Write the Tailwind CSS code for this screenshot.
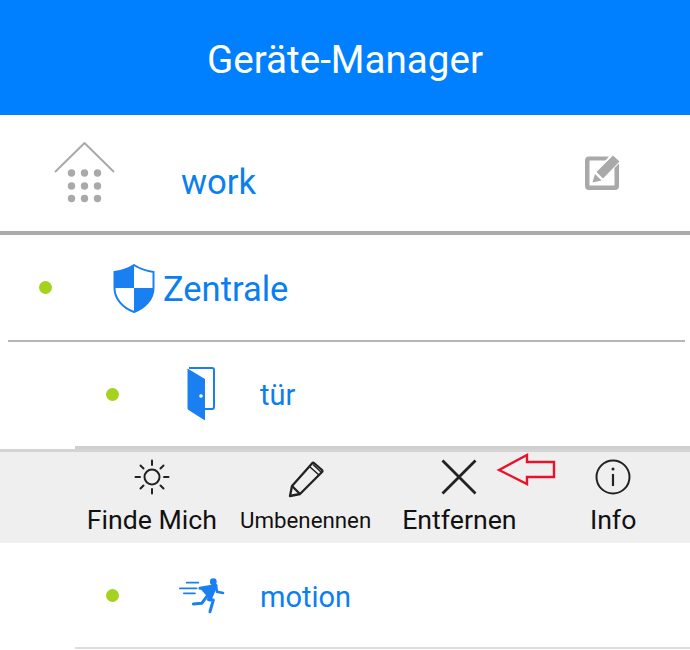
<!doctype html>
<html>
  <head>
    <meta charset="utf-8">
    <title>Geräte-Manager</title>
    <script src="https://cdn.jsdelivr.net/npm/@tailwindcss/browser@4"></script>
  </head>
  <body class="bg-white font-['Roboto',sans-serif] overflow-hidden">
    <div class="relative w-[690px] h-[650px] overflow-hidden">
      <!-- Header -->
      <div class="h-[115px] bg-[#007fff] flex items-center justify-center text-white text-[38.6px] pt-[5px]">Geräte-Manager</div>

      <!-- Home row -->
      <div class="h-[116px] flex items-center pl-[54px] pr-[70px]">
        <svg class="w-[61px] h-[62px] shrink-0" viewBox="0 0 61 62" fill="#a9a9a9">
          <path d="M1 30 L30.5 1 L60 30" fill="none" stroke="#a9a9a9" stroke-width="2"/>
          <circle cx="17.5" cy="31" r="3.7"/><circle cx="30.5" cy="31" r="3.7"/><circle cx="43.5" cy="31" r="3.7"/>
          <circle cx="17.5" cy="44" r="3.7"/><circle cx="30.5" cy="44" r="3.7"/><circle cx="43.5" cy="44" r="3.7"/>
          <circle cx="17.5" cy="56.5" r="3.7"/><circle cx="30.5" cy="56.5" r="3.7"/><circle cx="43.5" cy="56.5" r="3.7"/>
        </svg>
        <span class="ml-[66px] pt-[18px] text-[34.7px] text-[#0a7ff0] flex-1">work</span>
        <svg class="w-[36px] h-[36px] mb-[1px]" viewBox="0 0 36 36" fill="#a9a9a9">
          <path d="M5 1.500 H25 L21.500 5.500 H6 a0.500 0.500 0 0 0 -0.500 0.500 V30 a0.500 0.500 0 0 0 0.500 0.500 H30 a0.500 0.500 0 0 0 0.500 -0.500 V13 L35 8.500 V31 a4 4 0 0 1 -4 4 H5 a4 4 0 0 1 -4 -4 V5.500 a4 4 0 0 1 4 -4 Z"/>
          <path d="M29 0.500 L35.500 6.500 L19 23.500 L12.500 17 Z"/>
          <path d="M11 19 L17.500 25.500 L8.500 27.500 Z"/>
        </svg>
      </div>
      <div class="h-[4px] bg-[#aaaaaa]"></div>

      <!-- Zentrale row -->
      <div class="h-[105px] flex items-center pl-[39px]">
        <span class="w-[13px] h-[13px] rounded-full bg-[#a4d21e] shrink-0"></span>
        <svg class="ml-[61px] w-[42px] h-[49px] shrink-0 mt-[2px]" viewBox="0 0 42 49">
          <path d="M21 1 C15 5 8 7 1.500 8 V24 C1.500 35 10 44 21 48 C32 44 40.500 35 40.500 24 V8 C34 7 27 5 21 1 Z" fill="#fff" stroke="#1a7ff0" stroke-width="2"/>
          <path d="M21 1 C15 5 8 7 1.500 8 V24 H21 Z M21 24 H40.500 C40.500 35 32 44 21 48 Z" fill="#1a7ff0"/>
        </svg>
        <span class="ml-[8px] pt-[4px] text-[34.500px] text-[#0a7ff0]">Zentrale</span>
      </div>
      <div class="ml-[8px] mr-[5px] h-[2px] bg-[#b5b5b5]"></div>

      <!-- Tür row -->
      <div class="h-[104px] flex items-center pl-[106px]">
        <span class="w-[13px] h-[13px] rounded-full bg-[#a4d21e] shrink-0"></span>
        <svg class="ml-[67px] w-[30px] h-[54px] shrink-0" viewBox="0 0 30 54">
          <path d="M3 1 H26 a2 2 0 0 1 2 2 V40 a2 2 0 0 1 -2 2 H19" fill="none" stroke="#1a7ff0" stroke-width="2"/>
          <path d="M1.500 1.500 L19 12 V53.500 L2.500 43 a2 2 0 0 1 -1 -1.700 Z" fill="#1a7ff0"/>
          <circle cx="15" cy="29" r="1.800" fill="#fff"/>
        </svg>
        <span class="ml-[44px] pt-[4px] text-[29px] text-[#0a7ff0]">tür</span>
      </div>

      <!-- Action toolbar -->
      <div class="ml-[75px] h-[3px] bg-[#cfcfcf]"></div>
      <div class="h-[3px] bg-[#d4d4d4]"></div>
      <div class="h-[91px] bg-[#efefef] pl-[75px] grid grid-cols-4 text-[#111] text-center">
        <div class="flex flex-col items-center">
          <svg class="w-[36px] h-[36px] mt-[7px]" viewBox="0 0 36 36" fill="none" stroke="#222" stroke-width="2" stroke-linecap="round">
            <circle cx="18" cy="18" r="7.500"/>
            <path d="M18 1.500 V6 M18 30 V34.500 M1.500 18 H6 M30 18 H34.500 M6.500 6.500 L9.500 9.500 M26.500 26.500 L29.500 29.500 M6.500 29.500 L9.500 26.500 M26.500 9.500 L29.500 6.500"/>
          </svg>
          <span class="text-[26.700px] leading-[30px] mt-[10px] whitespace-nowrap">Finde Mich</span>
        </div>
        <div class="flex flex-col items-center">
          <svg class="w-[36px] h-[37px] mt-[9px]" viewBox="0 0 36 37" fill="none" stroke="#222" stroke-width="2.300" stroke-linejoin="round">
            <path d="M26 2 L34 9 a1.500 1.500 0 0 1 0 2 L12 33 L2 35 L4 25 L24 2.500 a1.500 1.500 0 0 1 2 -0.500 Z"/>
            <path d="M22 6 L31 14 M25 3.500 L33 11" stroke-width="1.500"/>
            <path d="M4 25 L12 33"/>
          </svg>
          <span class="text-[22.300px] leading-[30px] mt-[7px] whitespace-nowrap">Umbenennen</span>
        </div>
        <div class="flex flex-col items-center">
          <svg class="w-[36px] h-[36px] mt-[7px]" viewBox="0 0 36 36" fill="none" stroke="#222" stroke-width="2.800">
            <path d="M1.500 1.500 L34.500 34.500 M34.500 1.500 L1.500 34.500"/>
          </svg>
          <span class="text-[26.700px] leading-[30px] mt-[10px] whitespace-nowrap">Entfernen</span>
        </div>
        <div class="flex flex-col items-center">
          <svg class="w-[36px] h-[36px] mt-[7px]" viewBox="0 0 36 36" fill="none" stroke="#222" stroke-width="2">
            <circle cx="18" cy="18" r="16.500"/>
            <path d="M18 15 V27" stroke-width="2.200"/>
            <circle cx="18" cy="10" r="1.500" fill="#222" stroke="none"/>
          </svg>
          <span class="text-[26.700px] leading-[30px] mt-[10px] whitespace-nowrap">Info</span>
        </div>
      </div>

      <!-- Motion row -->
      <div class="h-[104px] flex items-center pl-[106px]">
        <span class="w-[13px] h-[13px] rounded-full bg-[#a4d21e] shrink-0"></span>
        <svg class="ml-[60px] w-[46px] h-[36px] shrink-0 mt-[2px]" viewBox="0 0 46 36" fill="none" stroke="#1a7ff0" stroke-linecap="round" stroke-linejoin="round">
          <circle cx="34.300" cy="3.700" r="3.400" fill="#1a7ff0" stroke="none"/>
          <path d="M7.700 4.700 H19.300 M0.800 10.300 H17.700 M4.800 15.300 H16" stroke-width="1.700"/>
          <path d="M21 10.300 L37 7.500 L31 22" fill="#1a7ff0" stroke-width="3"/>
          <path d="M37 8 L38 13.700 L44 15" stroke-width="2.600"/>
          <path d="M14.300 26 L22.700 25.300 L27.700 18.700" stroke-width="3"/>
          <path d="M29.300 21.500 L34.300 22 L31 33.700" stroke-width="3"/>
        </svg>
        <span class="ml-[35px] pt-[6px] text-[29px] text-[#0a7ff0]">motion</span>
      </div>
      <div class="ml-[75px] h-[2px] bg-[#dddddd]"></div>

      <!-- Red annotation arrow -->
      <svg class="absolute left-[496px] top-[452px] w-[60px] h-[34px]" viewBox="0 0 60 34" fill="none" stroke="#e8132a" stroke-width="2.400">
        <path d="M3 18 L31 3 V10 H58 V25 H31 V32 Z"/>
      </svg>
    </div>
  </body>
</html>
